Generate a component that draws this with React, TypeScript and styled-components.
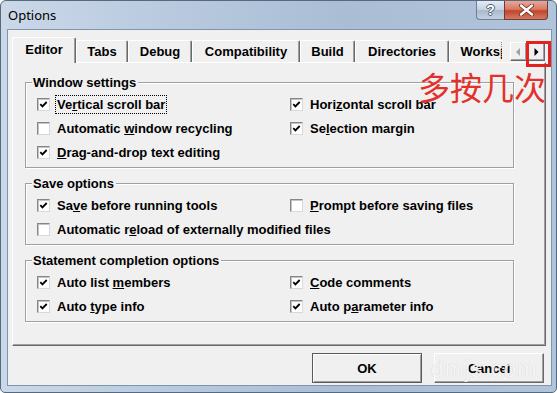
import React from "react";
import styled, { createGlobalStyle } from "styled-components";

const GlobalStyle = createGlobalStyle`
  html, body { margin: 0; padding: 0; background: #ffffff; }
  body { font-family: "Liberation Sans", Arial, sans-serif; }
  * { box-sizing: border-box; }
`;

const Window = styled.div`
  position: relative;
  width: 557px;
  height: 393px;
  display: flex;
  flex-direction: column;
  border: 1px solid #55697f;
  border-radius: 6px 6px 5px 5px;
  background: linear-gradient(to right, #cad8e8 0%, #b9cadf 30%, #aabdd5 62%, #b2c4da 100%);
  padding: 0 4px 6px 6px;
  overflow: hidden;
`;

const TitleBar = styled.div`
  height: 28px;
  display: flex;
  align-items: flex-start;
  flex-shrink: 0;
`;

const TitleText = styled.div`
  font-family: "Noto Sans", "Liberation Sans", sans-serif;
  font-size: 13px;
  line-height: 28px;
  color: #000;
  padding-left: 1px;
`;

const CaptionButtons = styled.div`
  margin-left: auto;
  margin-right: 4px;
  display: flex;
  height: 19px;
`;

const HelpButton = styled.div`
  width: 28px;
  height: 19px;
  border: 1px solid #6d7f95;
  border-top: none;
  border-right: none;
  border-radius: 0 0 0 4px;
  background: linear-gradient(#e4ebf3 0%, #c6d3e1 48%, #a9bace 52%, #c3d0df 100%);
  display: flex;
  align-items: center;
  justify-content: center;
  font-family: "Liberation Sans", Arial, sans-serif;
  font-weight: bold;
  font-size: 14px;
  color: #ffffff;
  text-shadow: 1px 0 0 #4f5f73, -1px 0 0 #4f5f73, 0 1px 0 #4f5f73, 0 -1px 0 #4f5f73;
`;

const CloseButton = styled.div`
  width: 44px;
  height: 19px;
  border: 1px solid #6e3a33;
  border-top: none;
  border-radius: 0 0 4px 0;
  background: linear-gradient(#e9a898 0%, #d87a66 45%, #c4442c 55%, #d27a63 100%);
  display: flex;
  align-items: center;
  justify-content: center;
`;

const Client = styled.div`
  flex: 1;
  display: flex;
  flex-direction: column;
  background: #f0f0f0;
  border: 1px solid #8094ab;
  padding: 7px 5px 2px 4px;
`;

const TabStrip = styled.div`
  height: 25px;
  display: flex;
  align-items: flex-end;
  flex-shrink: 0;
`;

const TabViewport = styled.div`
  width: 490px;
  height: 26px;
  margin-bottom: -1px;
  margin-right: 3px;
  display: flex;
  align-items: flex-end;
  overflow: hidden;
  position: relative;
  z-index: 1;

  &::after {
    content: "";
    position: absolute;
    right: 0;
    top: 5px;
    height: 15px;
    border-right: 1px dotted #8a8a8a;
  }
`;

const Tab = styled.div<{ $active?: boolean; $w: number }>`
  flex-shrink: 0;
  width: ${(p) => p.$w}px;
  height: ${(p) => (p.$active ? 26 : 22)}px;
  margin-bottom: ${(p) => (p.$active ? 0 : 1)}px;
  display: flex;
  align-items: center;
  justify-content: center;
  padding-bottom: ${(p) => (p.$active ? 2 : 0)}px;
  background: #f0f0f0;
  border-top: 1px solid #ffffff;
  border-left: 1px solid #ffffff;
  border-right: 1px solid #696969;
  box-shadow: inset -1px 0 0 #a0a0a0;
  border-radius: 2px 2px 0 0;
  font-weight: bold;
  font-size: 13px;
  color: #000;
  white-space: nowrap;
`;

const Spinner = styled.div`
  display: flex;
  margin-left: 5px;
  margin-bottom: 1px;
  flex-shrink: 0;
`;

const SpinButton = styled.div<{ $w: number }>`
  width: ${(p) => p.$w}px;
  height: 19px;
  background: #f0f0f0;
  border: 1px solid;
  border-color: #ffffff #696969 #696969 #ffffff;
  box-shadow: inset -1px -1px 0 #a0a0a0;
  display: flex;
  align-items: center;
  justify-content: center;
`;

const Panel = styled.div`
  flex: 1;
  display: flex;
  flex-direction: column;
  gap: 15px;
  background: #f0f0f0;
  border: 1px solid;
  border-color: #ffffff #696969 #696969 #ffffff;
  box-shadow: inset -1px -1px 0 #a0a0a0;
  padding: 19px 31px 0 12px;
`;

const GroupBox = styled.div`
  position: relative;
  border: 1px solid #a0a0a0;
  box-shadow: inset 1px 1px 0 #ffffff, 1px 1px 0 #ffffff;
  padding: 9px 0 3px 11px;
  display: grid;
  grid-template-columns: 253px 1fr;
  grid-auto-rows: 24px;
`;

const GroupCaption = styled.span`
  position: absolute;
  top: -8px;
  left: 6px;
  padding: 0 2px 0 1px;
  background: #f0f0f0;
  font-weight: bold;
  font-size: 13px;
  line-height: 15px;
  color: #000;
  white-space: nowrap;
`;

const OptionRow = styled.label<{ $span?: boolean }>`
  display: flex;
  align-items: center;
  gap: 6px;
  grid-column: ${(p) => (p.$span ? "1 / span 2" : "auto")};
  font-weight: bold;
  font-size: 13px;
  color: #000;
  white-space: nowrap;
`;

const Box = styled.span`
  width: 13px;
  height: 13px;
  flex-shrink: 0;
  background: #ffffff;
  border: 1px solid;
  border-color: #868686 #d8d8d8 #d8d8d8 #868686;
  box-shadow: inset 1px 1px 0 #c4c4c4;
  display: flex;
  align-items: center;
  justify-content: center;
`;

const OptionText = styled.span<{ $focus?: boolean }>`
  padding: 1px 1px;
  line-height: 15px;
  outline: ${(p) => (p.$focus ? "1px dotted #000" : "none")};
`;

const Footer = styled.div`
  display: flex;
  justify-content: flex-end;
  gap: 12px;
  margin-top: 7px;
  padding-right: 2px;
  flex-shrink: 0;
`;

const Button = styled.div<{ $default?: boolean }>`
  width: 110px;
  height: 30px;
  display: flex;
  align-items: center;
  justify-content: center;
  background: #f0f0f0;
  border: 1px solid;
  border-color: ${(p) => (p.$default ? "#5a5a5a" : "#ffffff #696969 #696969 #ffffff")};
  box-shadow: ${(p) =>
    p.$default
      ? "inset 1px 1px 0 #ffffff, inset -1px -1px 0 #a0a0a0"
      : "inset -1px -1px 0 #a0a0a0"};
  font-weight: bold;
  font-size: 13px;
  color: #000;
`;

const Annotation = styled.div`
  position: absolute;
  left: 417px;
  top: 69px;
  font-family: "Noto Sans CJK SC", "Noto Sans", sans-serif;
  font-size: 32px;
  line-height: 32px;
  color: #e2302a;
  white-space: nowrap;
`;

const Highlight = styled.div`
  position: absolute;
  left: 525px;
  top: 40px;
  width: 25px;
  height: 26px;
  border: 3px solid #e3211e;
`;

const Watermark = styled.div`
  position: absolute;
  left: 430px;
  top: 355px;
  font-family: "Liberation Sans", Arial, sans-serif;
  font-size: 23px;
  line-height: 26px;
  letter-spacing: 1px;
  color: rgba(255, 255, 255, 0.85);
  text-shadow: 0 0 1px rgba(120, 120, 120, 0.4);
  white-space: nowrap;
`;

const Check = () => (
  <svg width="9" height="9" viewBox="0 0 9 9">
    <polyline points="1.3,4.2 3.4,6.4 7.7,2" fill="none" stroke="#000" strokeWidth="1.8" />
  </svg>
);

type OptProps = { checked?: boolean; focus?: boolean; span?: boolean; children: React.ReactNode };

const Option = ({ checked, focus, span, children }: OptProps) => (
  <OptionRow $span={span}>
    <Box>{checked && <Check />}</Box>
    <OptionText $focus={focus}>{children}</OptionText>
  </OptionRow>
);

const tabs = [
  { label: "Editor", w: 64 },
  { label: "Tabs", w: 52 },
  { label: "Debug", w: 64 },
  { label: "Compatibility", w: 108 },
  { label: "Build", w: 55 },
  { label: "Directories", w: 94 },
  { label: "Workspace", w: 92 },
];

export default function App() {
  return (
    <>
      <GlobalStyle />
      <Window>
        <TitleBar>
          <TitleText>Options</TitleText>
          <CaptionButtons>
            <HelpButton>?</HelpButton>
            <CloseButton>
              <svg width="15" height="12" viewBox="0 0 15 12">
                <path d="M2 1.5 L13 10.5 M13 1.5 L2 10.5" stroke="#6a2a20" strokeWidth="4" strokeLinecap="round" />
                <path d="M2 1.5 L13 10.5 M13 1.5 L2 10.5" stroke="#ffffff" strokeWidth="2.4" strokeLinecap="round" />
              </svg>
            </CloseButton>
          </CaptionButtons>
        </TitleBar>
        <Client>
          <TabStrip>
            <TabViewport>
              {tabs.map((t, i) => (
                <Tab key={t.label} $w={t.w} $active={i === 0}>
                  {t.label}
                </Tab>
              ))}
            </TabViewport>
            <Spinner>
              <SpinButton $w={17}>
                <svg width="5" height="8" viewBox="0 0 5 8">
                  <polygon points="4,0 4,8 0,4" fill="#a0a0a0" />
                </svg>
              </SpinButton>
              <SpinButton $w={18}>
                <svg width="5" height="8" viewBox="0 0 5 8">
                  <polygon points="0.5,0 0.5,8 4.5,4" fill="#000" />
                </svg>
              </SpinButton>
            </Spinner>
          </TabStrip>
          <Panel>
            <GroupBox>
              <GroupCaption>Window settings</GroupCaption>
              <Option checked focus>
                Ve<u>r</u>tical scroll bar
              </Option>
              <Option checked>
                Hori<u>z</u>ontal scroll bar
              </Option>
              <Option>
                Automatic <u>w</u>indow recycling
              </Option>
              <Option checked>
                Se<u>l</u>ection margin
              </Option>
              <Option checked>
                <u>D</u>rag-and-drop text editing
              </Option>
            </GroupBox>
            <GroupBox>
              <GroupCaption>Save options</GroupCaption>
              <Option checked>
                Sa<u>v</u>e before running tools
              </Option>
              <Option>
                <u>P</u>rompt before saving files
              </Option>
              <Option span>
                Automatic r<u>e</u>load of externally modified files
              </Option>
            </GroupBox>
            <GroupBox>
              <GroupCaption>Statement completion options</GroupCaption>
              <Option checked>
                Auto list <u>m</u>embers
              </Option>
              <Option checked>
                <u>C</u>ode comments
              </Option>
              <Option checked>
                Auto <u>t</u>ype info
              </Option>
              <Option checked>
                Auto p<u>a</u>rameter info
              </Option>
            </GroupBox>
          </Panel>
          <Footer>
            <Button $default>OK</Button>
            <Button>Cancel</Button>
          </Footer>
        </Client>
        <Annotation>多按几次</Annotation>
        <Highlight />
        <Watermark>dmjs.com</Watermark>
      </Window>
    </>
  );
}
